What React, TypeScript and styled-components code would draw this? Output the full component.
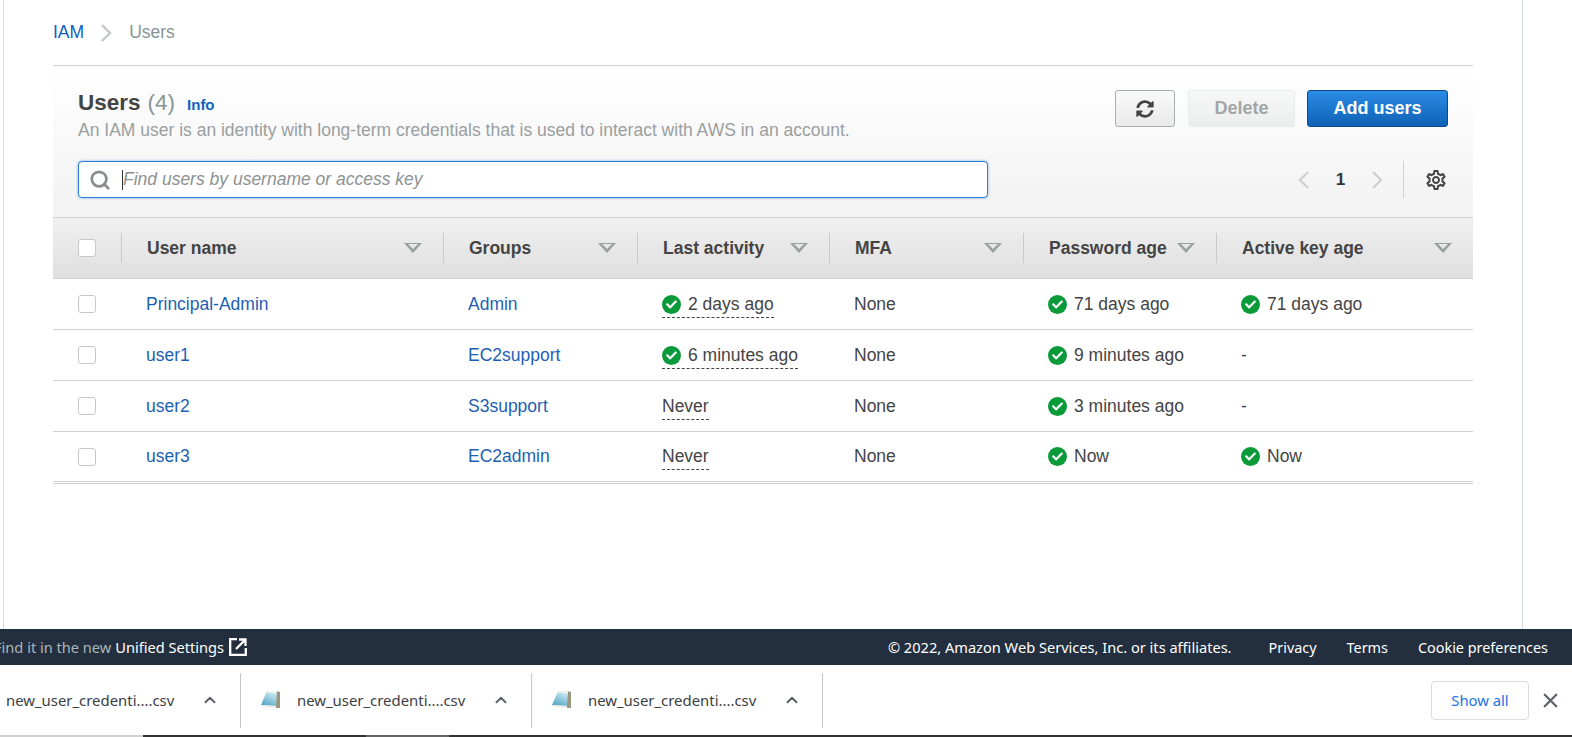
import React from "react";
import styled, { createGlobalStyle } from "styled-components";
import { FaCheck, FaSyncAlt } from "react-icons/fa";
import { FiSearch, FiChevronUp, FiX } from "react-icons/fi";
import { MdOutlineSettings } from "react-icons/md";

const GlobalStyle = createGlobalStyle`
  html, body { margin: 0; padding: 0; background: #fff; overflow: hidden; }
  body { font-family: "Liberation Sans", Arial, sans-serif; color: #444; }
  * { box-sizing: border-box; }
`;

const COLS = "68px 322px 194px 192px 194px 193px 1fr";

const users = [
  { name: "Principal-Admin", group: "Admin", activity: "2 days ago", activityOk: true, password: "71 days ago", key: "71 days ago" },
  { name: "user1", group: "EC2support", activity: "6 minutes ago", activityOk: true, password: "9 minutes ago", key: "-" },
  { name: "user2", group: "S3support", activity: "Never", activityOk: false, password: "3 minutes ago", key: "-" },
  { name: "user3", group: "EC2admin", activity: "Never", activityOk: false, password: "Now", key: "Now" },
];

const headers = ["User name", "Groups", "Last activity", "MFA", "Password age", "Active key age"];

const Ok = () => (
  <OkIcon>
    <FaCheck size={11} />
  </OkIcon>
);

const Chevron = ({ left, color }: { left?: boolean; color: string }) => (
  <svg width="11" height="18" viewBox="0 0 11 18">
    <path d={left ? "M10 1 L2 9 L10 17" : "M1 1 L9 9 L1 17"} fill="none" stroke={color} strokeWidth="2.4" />
  </svg>
);

const NoteIcon = () => (
  <svg width="22" height="20" viewBox="0 0 22 20">
    <defs>
      <linearGradient id="note" x1="0.7" y1="0" x2="0.2" y2="1">
        <stop offset="0" stopColor="#d4eef5" />
        <stop offset="1" stopColor="#4fa3c4" />
      </linearGradient>
    </defs>
    <path d="M16 1 L20 2 L20 18 L15 18 Z" fill="#9a9680" />
    <path d="M7 1 L17 1.5 L16 16 L1 15 Z" fill="url(#note)" />
    <path d="M7 1 L17 1.5 L17 3 L6 2.5 Z" fill="#f4f4f0" />
    <path d="M1 15 L16 16 L16 18 L2 17 Z" fill="#eeeeea" />
  </svg>
);

const Download = ({ icon = true }: { icon?: boolean }) => (
  <ShelfItem $first={!icon}>
    {icon && <NoteIcon />}
    <FileName>new_user_credenti....csv</FileName>
    <FiChevronUp size={18} strokeWidth={2.6} color="#5f6368" />
  </ShelfItem>
);

export default function App() {
  return (
    <Page>
      <GlobalStyle />
      <Main>
        <Breadcrumb>
          <CrumbLink>IAM</CrumbLink>
          <Chevron color="#c4c7c7" />
          <CrumbCurrent>Users</CrumbCurrent>
        </Breadcrumb>
        <Card>
          <CardHeader>
            <TitleRow>
              <div>
                <TitleLine>
                  <Title>Users</Title>
                  <Count>(4)</Count>
                  <InfoLink>Info</InfoLink>
                </TitleLine>
                <Description>
                  An IAM user is an identity with long-term credentials that is used to interact with AWS in an account.
                </Description>
              </div>
              <Actions>
                <IconButton aria-label="Refresh">
                  <FaSyncAlt size={18} />
                </IconButton>
                <DisabledButton>Delete</DisabledButton>
                <PrimaryButton>Add users</PrimaryButton>
              </Actions>
            </TitleRow>
            <FilterRow>
              <SearchBox>
                <FiSearch size={22} strokeWidth={3} color="#8a8d8d" />
                <Caret />
                <SearchInput placeholder="Find users by username or access key" />
              </SearchBox>
              <Pager>
                <Chevron left color="#cfd1d1" />
                <PageNumber>1</PageNumber>
                <Chevron color="#cfd1d1" />
                <PagerDivider />
                <MdOutlineSettings size={24} color="#444" />
              </Pager>
            </FilterRow>
          </CardHeader>
          <HeadRow>
            <HeadCheckCell>
              <Checkbox />
            </HeadCheckCell>
            {headers.map((h) => (
              <HeadCell key={h}>
                <span>{h}</span>
                <SortCaret />
              </HeadCell>
            ))}
          </HeadRow>
          {users.map((u) => (
            <Row key={u.name}>
              <CheckCell>
                <Checkbox />
              </CheckCell>
              <Cell>
                <TableLink>{u.name}</TableLink>
              </Cell>
              <Cell>
                <TableLink>{u.group}</TableLink>
              </Cell>
              <Cell>
                <Dashed>
                  {u.activityOk && <Ok />}
                  {u.activity}
                </Dashed>
              </Cell>
              <Cell>None</Cell>
              <Cell>
                <Ok />
                {u.password}
              </Cell>
              <Cell>
                {u.key !== "-" && <Ok />}
                {u.key}
              </Cell>
            </Row>
          ))}
          <TableEnd />
        </Card>
      </Main>
      <Footer>
        <FooterLeft>
          <FooterMuted>Find it in the new</FooterMuted>
          <span>Unified Settings</span>
          <ExternalIcon width="18" height="18" viewBox="0 0 18 18">
            <path d="M8 1.2 H1.2 V16.8 H16.8 V10" fill="none" stroke="#fff" strokeWidth="2.3" />
            <path d="M10 1.5 H16.5 V8 M16.5 1.5 L7 11" fill="none" stroke="#fff" strokeWidth="2.3" />
          </ExternalIcon>
        </FooterLeft>
        <FooterRight>
          <Copyright>© 2022, Amazon Web Services, Inc. or its affiliates.</Copyright>
          <FooterLink>Privacy</FooterLink>
          <FooterLink>Terms</FooterLink>
          <FooterLink>Cookie preferences</FooterLink>
        </FooterRight>
      </Footer>
      <Shelf>
        <Download icon={false} />
        <Download />
        <Download />
        <ShelfEnd>
          <ShowAll>Show all</ShowAll>
          <FiX size={23} strokeWidth={2.4} color="#5f6368" />
        </ShelfEnd>
      </Shelf>
      <BottomStrip>
        <StripPart $w="143px" $c="#d0d0d0" />
        <StripPart $w="223px" $c="#333" />
        <StripPart $w="83px" $c="#666" />
        <StripPart $w="1123px" $c="#333" />
      </BottomStrip>
    </Page>
  );
}

const Page = styled.div`
  width: 1572px;
  height: 737px;
  display: flex;
  flex-direction: column;
  overflow: hidden;
`;
const Main = styled.main`
  flex: 1;
  width: 1520px;
  margin-left: 3px;
  border-left: 1px solid #d5dbdb;
  border-right: 1px solid #d5dbdb;
  padding: 0 49px;
`;
const Breadcrumb = styled.nav`
  height: 65px;
  display: flex;
  align-items: center;
  gap: 17px;
  font-size: 17.5px;
`;
const CrumbLink = styled.span`
  color: #0f62bd;
`;
const CrumbCurrent = styled.span`
  color: #879596;
`;
const Card = styled.section`
  border-top: 1px solid #d0d2d2;
`;
const CardHeader = styled.div`
  height: 152px;
  padding: 24px 25px 0;
  background: linear-gradient(#fff, #f2f2f2);
  border-bottom: 1px solid #d0d2d2;
`;
const TitleRow = styled.div`
  display: flex;
  justify-content: space-between;
`;
const TitleLine = styled.div`
  display: flex;
  align-items: baseline;
  height: 30px;
`;
const Title = styled.span`
  font-size: 22.5px;
  font-weight: 700;
  color: #444;
`;
const Count = styled.span`
  font-size: 22.5px;
  color: #879596;
  margin-left: 7px;
`;
const InfoLink = styled.span`
  font-size: 15px;
  font-weight: 700;
  color: #0f62bd;
  margin-left: 12px;
`;
const Description = styled.div`
  font-size: 17.5px;
  line-height: 20px;
  color: #9a9f9f;
  white-space: nowrap;
`;
const Actions = styled.div`
  display: flex;
  gap: 12px;
`;
const BaseButton = styled.button`
  height: 37px;
  border-radius: 3px;
  font-family: inherit;
  font-size: 18px;
  font-weight: 700;
  display: flex;
  align-items: center;
  justify-content: center;
  padding: 0;
`;
const IconButton = styled(BaseButton)`
  width: 60px;
  color: #444;
  background: linear-gradient(#fafafa, #e9e9e9);
  border: 1px solid #aab0b0;
  margin-right: 1px;
`;
const DisabledButton = styled(BaseButton)`
  width: 107px;
  color: #a3a6a6;
  background: linear-gradient(#f8f8f8, #ebecec);
  border: 1px solid #eaeded;
`;
const PrimaryButton = styled(BaseButton)`
  width: 141px;
  color: #fff;
  background: linear-gradient(#2b8be6, #0f62b5);
  border: 1px solid #0b4a8c;
`;
const FilterRow = styled.div`
  display: flex;
  justify-content: space-between;
  align-items: center;
  margin-top: 21px;
`;
const SearchBox = styled.div`
  width: 910px;
  height: 37px;
  display: flex;
  align-items: center;
  padding-left: 10px;
  background: #fff;
  border: 1px solid #2b7fd6;
  border-radius: 4px;
  box-shadow: 0 0 3px rgba(43, 127, 214, 0.6);
`;
const Caret = styled.span`
  width: 1px;
  height: 20px;
  background: #333;
  margin-left: 11px;
`;
const SearchInput = styled.input`
  flex: 1;
  border: none;
  outline: none;
  background: transparent;
  font-family: inherit;
  font-size: 17.5px;
  font-style: italic;
  padding: 0;
  &::placeholder {
    color: #8d9292;
    opacity: 1;
  }
`;
const Pager = styled.div`
  display: flex;
  align-items: center;
`;
const PageNumber = styled.span`
  width: 63px;
  text-align: center;
  font-size: 17px;
  font-weight: 700;
  color: #333;
`;
const PagerDivider = styled.span`
  width: 1px;
  height: 37px;
  background: #d0d2d2;
  margin: 0 20px;
`;
const HeadRow = styled.div`
  height: 61px;
  display: grid;
  grid-template-columns: ${COLS};
  align-items: center;
  background: linear-gradient(#f0f0f0, #dfdfdf);
  border-bottom: 1px solid #d0d2d2;
`;
const HeadCheckCell = styled.div`
  height: 30px;
  padding-left: 25px;
  display: flex;
  align-items: center;
`;
const HeadCell = styled.div`
  height: 30px;
  display: flex;
  align-items: center;
  justify-content: space-between;
  border-left: 1px solid #c8caca;
  padding: 0 21px 0 25px;
  font-size: 17.5px;
  font-weight: 700;
  color: #444;
  white-space: nowrap;
`;
const SortCaret = styled.span`
  width: 0;
  height: 0;
  border-left: 9px solid transparent;
  border-right: 9px solid transparent;
  border-top: 10px solid #99a0a0;
  position: relative;
  &::after {
    content: "";
    position: absolute;
    left: -5px;
    top: -9px;
    border-left: 5px solid transparent;
    border-right: 5px solid transparent;
    border-top: 5px solid #e6e7e7;
  }
`;
const Row = styled.div`
  height: 51px;
  display: grid;
  grid-template-columns: ${COLS};
  align-items: center;
  border-bottom: 1px solid #d0d2d2;
  font-size: 17.5px;
  color: #444;
  &:nth-last-child(2) {
    height: 50px;
  }
`;
const CheckCell = styled.div`
  padding-left: 25px;
  display: flex;
  align-items: center;
`;
const Cell = styled.div`
  padding-left: 25px;
  display: flex;
  align-items: center;
  white-space: nowrap;
`;
const Checkbox = styled.span`
  width: 18px;
  height: 18px;
  background: #fff;
  border: 1px solid #c5c9c9;
  border-radius: 3px;
`;
const TableLink = styled.span`
  color: #1e5fb4;
`;
const Dashed = styled.span`
  display: inline-flex;
  align-items: center;
  padding-bottom: 2px;
  margin-bottom: -3px;
  border-bottom: 1px dashed #444;
`;
const OkIcon = styled.span`
  width: 19px;
  height: 19px;
  border-radius: 50%;
  background: #0a9a3a;
  color: #fff;
  display: inline-flex;
  align-items: center;
  justify-content: center;
  margin-right: 7px;
`;
const TableEnd = styled.div`
  height: 1px;
  margin-top: 1px;
  background: #d0d2d2;
`;
const Footer = styled.footer`
  height: 36px;
  background: #232f3e;
  display: flex;
  align-items: center;
  justify-content: space-between;
  padding-right: 24px;
  font-family: "Noto Sans", "Open Sans", sans-serif;
  font-size: 14.6px;
  color: #fff;
  white-space: nowrap;
`;
const FooterLeft = styled.div`
  display: flex;
  align-items: center;
  margin-left: -6px;
`;
const FooterMuted = styled.span`
  color: #aab7b8;
  margin-right: 4px;
`;
const FooterLink = styled.span`
  font-size: 14.4px;
`;
const ExternalIcon = styled.svg`
  margin-left: 5px;
`;
const FooterRight = styled.div`
  display: flex;
  align-items: center;
  gap: 30px;
`;
const Copyright = styled.span`
  margin-right: 7px;
`;
const Shelf = styled.div`
  height: 70px;
  display: flex;
  align-items: center;
  background: #fff;
  font-family: "Noto Sans", "Open Sans", sans-serif;
`;
const ShelfItem = styled.div<{ $first: boolean }>`
  width: ${(p) => (p.$first ? "241px" : "291px")};
  height: 55px;
  display: flex;
  align-items: center;
  gap: 15px;
  padding-left: ${(p) => (p.$first ? "6px" : "19px")};
  border-right: 1px solid #c8c8c8;
`;
const FileName = styled.span`
  font-size: 14.9px;
  color: #3c4043;
  margin-right: 12px;
  white-space: nowrap;
`;
const ShelfEnd = styled.div`
  margin-left: auto;
  display: flex;
  align-items: center;
  gap: 10px;
  padding-right: 10px;
`;
const ShowAll = styled.span`
  width: 98px;
  height: 39px;
  display: flex;
  align-items: center;
  justify-content: center;
  border: 1px solid #dadce0;
  border-radius: 4px;
  font-size: 14.8px;
  color: #1a73e8;
`;
const BottomStrip = styled.div`
  height: 2px;
  display: flex;
`;
const StripPart = styled.span<{ $w: string; $c: string }>`
  width: ${(p) => p.$w};
  background: ${(p) => p.$c};
`;
